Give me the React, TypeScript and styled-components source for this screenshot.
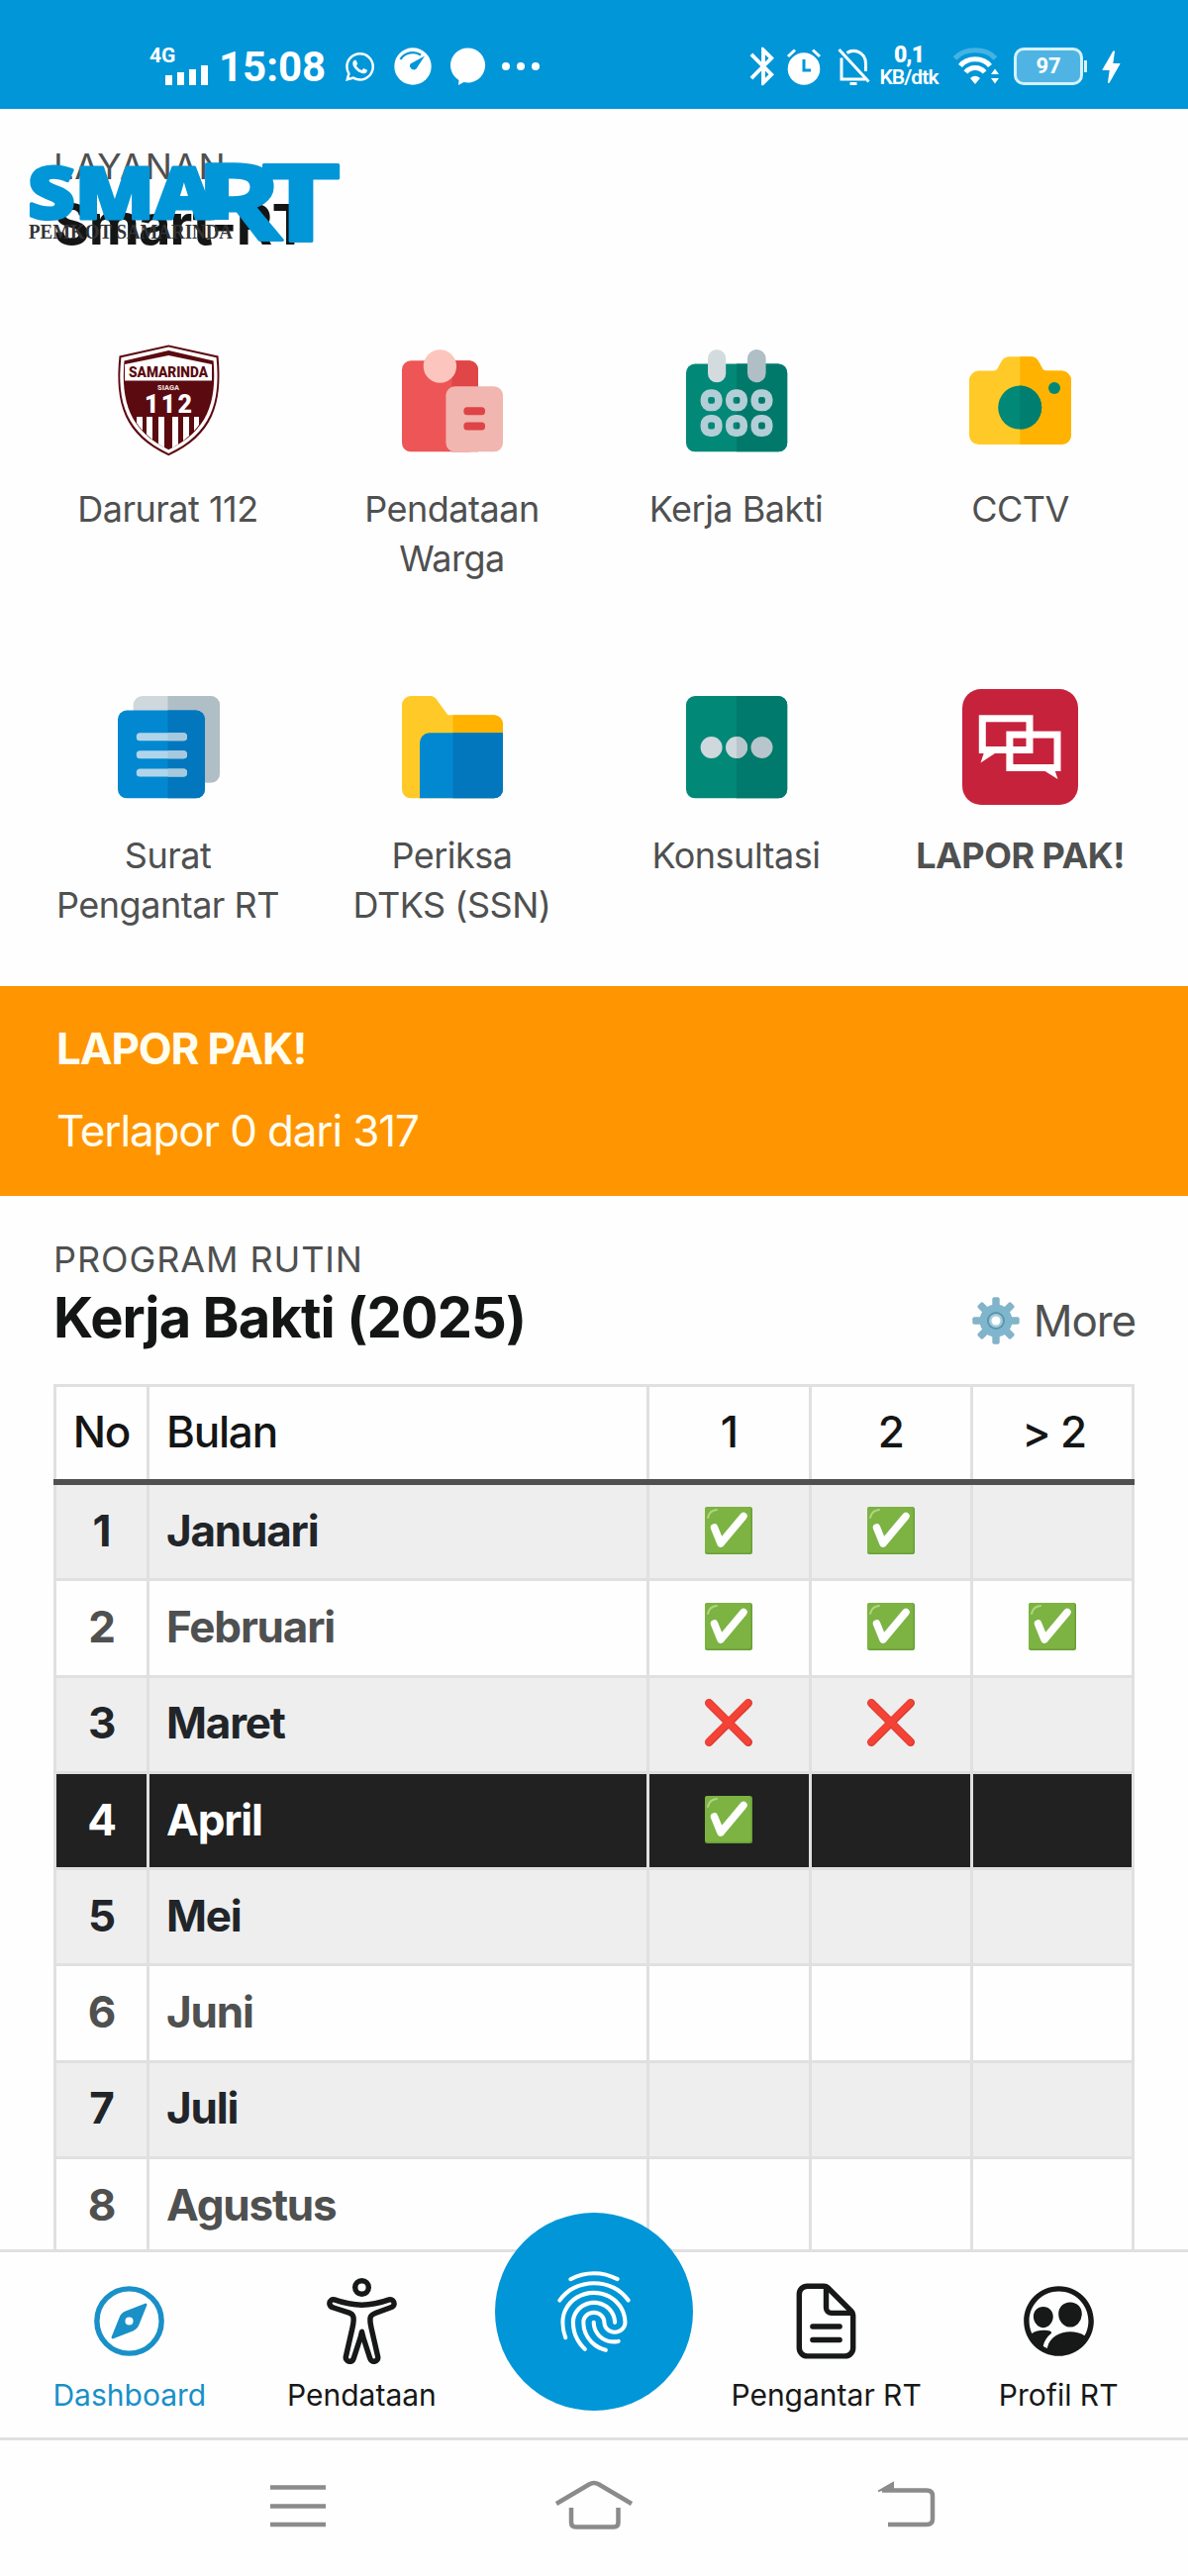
import React from 'react';
import styled, { createGlobalStyle } from 'styled-components';
import {
  IoAccessibilityOutline,
  IoCompassOutline,
  IoDocumentTextOutline,
  IoLogoWhatsapp,
  IoPeopleCircleOutline,
} from 'react-icons/io5';
import { MdBluetooth, MdBolt, MdFingerprint } from 'react-icons/md';

type Mark = 'yes' | 'no' | '';

const months: { name: string; marks: Mark[] }[] = [
  { name: 'Januari', marks: ['yes', 'yes', ''] },
  { name: 'Februari', marks: ['yes', 'yes', 'yes'] },
  { name: 'Maret', marks: ['no', 'no', ''] },
  { name: 'April', marks: ['yes', '', ''] },
  { name: 'Mei', marks: ['', '', ''] },
  { name: 'Juni', marks: ['', '', ''] },
  { name: 'Juli', marks: ['', '', ''] },
  { name: 'Agustus', marks: ['', '', ''] },
];

const CURRENT_MONTH = 4;

const ShieldIcon = () => (
  <svg viewBox='0 0 117 117'>
    <defs>
      <clipPath id='shield'>
        <path d='M59.3 8 L104 20 C107 58 98 88 59.3 108.5 C20 88 12 58 15 20 Z' />
      </clipPath>
    </defs>
    <path d='M59.3 2.6 L109.5 13.6 C114 62 104 94 59.3 114.3 C15 94 4.5 62 9.5 13.6 Z' fill='#5b0a10' />
    <path d='M59.3 4.5 L107.6 15.3 C112 61 102 92 59.3 112 C17 92 6.5 61 11.4 15.3 Z' fill='#fff' />
    <path d='M59.3 8 L104.6 18.5 C108 60 99 89 59.3 108.3 C20 89 11 60 14.5 18.5 Z' fill='#5b0a10' />
    <g clipPath='url(#shield)'>
      <path d='M15 38.5 V22 L59.3 13 L103 22 V38.5 Z' fill='#fff' />
      <path d='M27 75h6v32h-6zM37 75h6v32h-6zM49 75h6v32h-6zM63 75h6v32h-6zM74 75h6v32h-6zM85 75h5v32h-5z' fill='#fff' />
    </g>
    <ShieldText x='19' y='34.5' textLength='80' lengthAdjust='spacingAndGlyphs' fontSize='15' fill='#5b0a10'>
      SAMARINDA
    </ShieldText>
    <ShieldText x='48' y='48' textLength='22' lengthAdjust='spacingAndGlyphs' fontSize='7.5' fill='#e8d5d5'>
      SIAGA
    </ShieldText>
    <ShieldText x='35' y='71' textLength='48' lengthAdjust='spacing' fontSize='25' fill='#fff'>
      112
    </ShieldText>
  </svg>
);

const ClipboardIcon = () => (
  <svg viewBox='0 0 117 117'>
    <rect x='8' y='18.3' width='77' height='92' rx='9' fill='#ee5556' />
    <path d='M58.5 18.3H76a9 9 0 0 1 9 9V110.3H58.5Z' fill='#e04548' />
    <circle cx='46.4' cy='24' r='16.7' fill='#fcc5bd' />
    <rect x='52.4' y='44.3' width='57.6' height='66' rx='9' fill='#f0b6af' />
    <rect x='70.4' y='65.3' width='21.6' height='8' rx='3.5' fill='#de4347' />
    <rect x='70.4' y='80.5' width='21.6' height='8' rx='3.5' fill='#de4347' />
  </svg>
);

const CalendarIcon = () => (
  <svg viewBox='0 0 117 117'>
    <rect x='8' y='21.6' width='102.2' height='88.7' rx='9' fill='#028877' />
    <path d='M59 21.6H101.2a9 9 0 0 1 9 9V101.3a9 9 0 0 1-9 9H59Z' fill='#00796b' />
    <rect x='30' y='7' width='18.2' height='33.3' rx='9.1' fill='#d3dbdf' />
    <rect x='70' y='7' width='18.6' height='33.3' rx='9.2' fill='#b0bec5' />
    {[58.3, 84].map((y) =>
      [33.6, 59, 84.5].map((x) => (
        <rect key={`${x}-${y}`} x={x - 7.2} y={y - 7.2} width='14.4' height='14.4' rx='6' fill='none' stroke='#b3ced6' strokeWidth='7.6' />
      ))
    )}
  </svg>
);

const CameraIcon = () => (
  <svg viewBox='0 0 117 117'>
    <path
      d='M16.5 28.6H31c3 0 4-1 5.5-4l3-5.5c2-3.5 4.5-4.8 8-4.8H69c3.5 0 6 1.3 8 4.8l3 5.5c1.5 3 2.5 4 5.5 4H100.5a9.5 9.5 0 0 1 9.5 9.5V93.5a9.5 9.5 0 0 1-9.5 9.5H16.5a9.5 9.5 0 0 1-9.5-9.5V38.1a9.5 9.5 0 0 1 9.5-9.5Z'
      fill='#ffca28'
    />
    <path
      d='M58.2 14.3H69c3.5 0 6 1.3 8 4.8l3 5.5c1.5 3 2.5 4 5.5 4H100.5a9.5 9.5 0 0 1 9.5 9.5V93.5a9.5 9.5 0 0 1-9.5 9.5H58.2Z'
      fill='#ffb300'
    />
    <circle cx='58.2' cy='65.6' r='22' fill='#028877' />
    <path d='M58.2 43.6a22 22 0 0 1 0 44Z' fill='#007f70' />
    <circle cx='93' cy='46' r='6' fill='#028877' />
  </svg>
);

const LettersIcon = () => (
  <svg viewBox='0 0 117 117'>
    <rect x='23.7' y='7' width='87.3' height='87.6' rx='9' fill='#cfd8dc' />
    <path d='M58.5 7H102a9 9 0 0 1 9 9V85.6a9 9 0 0 1-9 9H58.5Z' fill='#b0bec5' />
    <rect x='8' y='21.6' width='88' height='88.7' rx='9' fill='#0288d1' />
    <path d='M58.5 21.6H87a9 9 0 0 1 9 9V101.3a9 9 0 0 1-9 9H58.5Z' fill='#0277bd' />
    {[44.2, 62.3, 80.4].map((y) => (
      <g key={y}>
        <rect x='26.8' y={y} width='51.2' height='8' rx='3.5' fill='#b0d5ea' />
        <path d={`M58.5 ${y}H74.5a3.5 3.5 0 0 1 3.5 4a3.5 3.5 0 0 1-3.5 4H58.5Z`} fill='#a6c9dd' />
      </g>
    ))}
  </svg>
);

const FolderIcon = () => (
  <svg viewBox='0 0 117 117'>
    <path d='M17 7H36c4 0 6 1.5 8 5l10.4 14.3H101a9 9 0 0 1 9 9V101a9 9 0 0 1-9 9.3H17a9 9 0 0 1-9-9V16a9 9 0 0 1 9-9Z' fill='#ffca28' />
    <path d='M59.5 26.3H101a9 9 0 0 1 9 9V60H59.5Z' fill='#ffb300' />
    <path d='M26 110.3V54a9.7 9.7 0 0 1 9.7-9.7H110V101.3a9 9 0 0 1-9 9Z' fill='#0288d1' />
    <path d='M59.5 44.3H110V101.3a9 9 0 0 1-9 9H59.5Z' fill='#0277bd' />
  </svg>
);

const ChatIcon = () => (
  <svg viewBox='0 0 117 117'>
    <rect x='8' y='7' width='102.2' height='103.3' rx='9' fill='#028877' />
    <path d='M59 7H101.2a9 9 0 0 1 9 9V101.3a9 9 0 0 1-9 9H59Z' fill='#007a6c' />
    <circle cx='33.6' cy='59' r='11' fill='#cfd8dc' />
    <circle cx='59' cy='59' r='11' fill='#cfd8dc' />
    <path d='M59 48a11 11 0 0 1 0 22Z' fill='#b7c6cc' />
    <circle cx='84.5' cy='59' r='11' fill='#b7c6cc' />
  </svg>
);

const LaporIcon = () => (
  <svg viewBox='0 0 117 117'>
    <rect width='117' height='117' rx='19' fill='#c7223c' />
    <rect x='20.3' y='29.8' width='47.7' height='31.7' fill='none' stroke='#fff' strokeWidth='7' />
    <rect x='47.9' y='46.1' width='48.1' height='33.4' fill='none' stroke='#fff' strokeWidth='7' />
    <path d='M22 64 L18.5 74.5 L34.5 64 Z M82 82 L96.5 91 L93.5 82 Z' fill='#fff' />
  </svg>
);

const CheckMark = () => (
  <MarkSvg viewBox='0 0 48 48'>
    <rect width='48' height='48' rx='2.5' fill='#689f38' />
    <rect width='46.5' height='46.5' rx='2.5' fill='#7cb342' />
    <path d='M3 11 C4 6 7 3.5 12 3' fill='none' stroke='#aed581' strokeWidth='2' strokeLinecap='round' />
    <path d='M9.5 21 L16 37 L39 9.5' fill='none' stroke='#fff' strokeWidth='7.5' strokeLinecap='round' strokeLinejoin='round' />
  </MarkSvg>
);

const CrossMark = () => (
  <MarkSvg viewBox='0 0 48 48'>
    <path d='M4.2 4.2 L43.8 43.8 M43.8 4.2 L4.2 43.8' fill='none' stroke='#d8382f' strokeWidth='8.4' strokeLinecap='round' />
    <path d='M4 4 L43.2 43.2 M43.4 4 L4 43.4' fill='none' stroke='#f44336' strokeWidth='6.6' strokeLinecap='round' />
  </MarkSvg>
);

const GearIcon = () => (
  <MarkSvg viewBox='0 0 48 48'>
    {[0, 45, 90, 135].map((angle) => (
      <rect key={angle} x='20.3' y='0.3' width='7.4' height='47.4' rx='2' fill='#83b3c8' transform={`rotate(${angle} 24 24)`} />
    ))}
    <circle cx='24' cy='24' r='16.5' fill='#7fb6cd' />
    <circle cx='24' cy='24' r='9' fill='#5a96ad' />
    <circle cx='24' cy='24' r='7' fill='#a3cbdb' />
    <circle cx='24' cy='24' r='4.5' fill='#fff' />
  </MarkSvg>
);

const services = [
  { label: 'Darurat 112', icon: <ShieldIcon /> },
  { label: 'Pendataan Warga', icon: <ClipboardIcon /> },
  { label: 'Kerja Bakti', icon: <CalendarIcon /> },
  { label: 'CCTV', icon: <CameraIcon /> },
  { label: 'Surat Pengantar RT', icon: <LettersIcon /> },
  { label: 'Periksa DTKS\u00a0(SSN)', icon: <FolderIcon /> },
  { label: 'Konsultasi', icon: <ChatIcon /> },
  { label: 'LAPOR PAK!', icon: <LaporIcon />, strong: true },
];

function StatusBar() {
  return (
    <Status>
      <StatusGroup>
        <Signal>
          <span>4G</span>
          <svg width='45' height='20' viewBox='0 0 45 20'>
            <path d='M1 10h7v10H1zM13 7h7v13H13zM25 4h7v16H25zM37 0h7v20H37z' fill='#fff' />
          </svg>
        </Signal>
        <Clock>15:08</Clock>
        <StatusIcon $gap={18}>
          <IoLogoWhatsapp size={33} />
        </StatusIcon>
        <StatusIcon $gap={18}>
          <svg width='38' height='38' viewBox='0 0 38 38'>
            <circle cx='19' cy='19' r='18.7' fill='#fff' />
            <path d='M6.5 12 C11 4.5 21 3.5 27 7.5' fill='none' stroke='#0096d8' strokeWidth='2.2' />
            <path d='M31 8.5 L22.5 21.5 A4 4 0 0 1 16.5 16.5 Z' fill='#0096d8' />
          </svg>
        </StatusIcon>
        <StatusIcon $gap={17}>
          <svg width='38' height='38' viewBox='0 0 38 38'>
            <path d='M19 .5a17.5 17.5 0 1 1-3.5 34.5L10 38l.5-5A17.5 17.5 0 0 1 19 .5Z' fill='#fff' />
          </svg>
        </StatusIcon>
        <StatusIcon $gap={15}>
          <svg width='40' height='10' viewBox='0 0 40 10'>
            <circle cx='5' cy='5' r='4' fill='#fff' />
            <circle cx='20' cy='5' r='4' fill='#fff' />
            <circle cx='35' cy='5' r='4' fill='#fff' />
          </svg>
        </StatusIcon>
      </StatusGroup>
      <StatusGroup>
        <MdBluetooth size={46} />
        <svg width='36' height='38' viewBox='0 0 36 38'>
          <circle cx='18' cy='21.5' r='16.3' fill='#fff' />
          <path d='M2 9 L9 2.5 M34 9 L27 2.5' stroke='#fff' strokeWidth='3' />
          <path d='M18 12v11h7' fill='none' stroke='#0096d8' strokeWidth='3' />
        </svg>
        <StatusIcon $gap={16}>
          <svg width='34' height='38' viewBox='0 0 34 38' fill='none' stroke='#fff' strokeWidth='3'>
            <path d='M1.5 2 L31.5 34.5' />
            <path d='M4 10.5V32H28' />
            <path d='M9.5 5.5C16 1 28.5 4 28.5 16.5V24' />
            <path d='M12.5 36.5h7' />
          </svg>
        </StatusIcon>
        <Speed>
          <b>0,1</b>
          <span>KB/dtk</span>
        </Speed>
        <StatusIcon $gap={14}>
          <svg width='47' height='38' viewBox='0 0 47 38' fill='none'>
            <path d='M1.5 11 C11 0 33 0 42.5 11' stroke='#45b2e4' strokeWidth='5' />
            <path d='M7 18.5 C14 9.5 30 9.5 37 18.5' stroke='#fff' strokeWidth='5' />
            <path d='M12.5 25 C17 19 27 19 31.5 25' stroke='#fff' strokeWidth='5' />
            <path d='M17 31 Q22 26.5 27 31 L22 37 Z' fill='#fff' />
            <path d='M38 27 L42 21.5 L46 27 Z M38 31 L42 36.5 L46 31 Z' fill='#fff' />
          </svg>
        </StatusIcon>
        <Battery>97</Battery>
        <BatteryTip />
        <MdBolt size={43} />
      </StatusGroup>
    </Status>
  );
}

function App() {
  return (
    <Screen>
      <GlobalStyle />
      <StatusBar />
      <Main>
        <Section>
          <Heading>
            <Kicker>LAYANAN</Kicker>
            <Title>Smart-RT</Title>
          </Heading>
          <Logo viewBox='0 0 330 90'>
            <defs>
              <clipPath id='legs'>
                <path d='M170 0H262V100H220L206 62H170Z' />
              </clipPath>
            </defs>
            <LogoCaption x='4' y='81' textLength='206' lengthAdjust='spacingAndGlyphs' fontSize='20'>
              PEMKOT SAMARINDA
            </LogoCaption>
            <LogoText $heavy x='3' y='61' textLength='188' lengthAdjust='spacingAndGlyphs' fontSize='73'>
              SMA
            </LogoText>
            <g clipPath='url(#legs)'>
              <LogoText x='172' y='82.5' textLength='88' lengthAdjust='spacingAndGlyphs' fontSize='107'>
                R
              </LogoText>
            </g>
            <LogoText x='239' y='82.5' textLength='80' lengthAdjust='spacingAndGlyphs' fontSize='107'>
              T
            </LogoText>
          </Logo>
        </Section>
        <Services>
          {services.map(({ label, icon, strong }) => (
            <Service key={label}>
              {icon}
              <ServiceLabel $strong={strong}>{label}</ServiceLabel>
            </Service>
          ))}
        </Services>
        <Banner>
          <strong>LAPOR PAK!</strong>
          <span>Terlapor 0 dari 317</span>
        </Banner>
        <Section $top={42}>
          <Heading>
            <Kicker>PROGRAM RUTIN</Kicker>
            <TitleRow>
              <Title>Kerja Bakti (2025)</Title>
              <More>
                <GearIcon />
                More
              </More>
            </TitleRow>
          </Heading>
          <Table>
            <HeadRow>
              <Cell $center>No</Cell>
              <Cell>Bulan</Cell>
              <Cell $center>1</Cell>
              <Cell $center>2</Cell>
              <Cell $center>&gt; 2</Cell>
            </HeadRow>
            {months.map(({ name, marks }, i) => (
              <Row key={name} $odd={i % 2 === 0} $current={i + 1 === CURRENT_MONTH}>
                <Cell $center>{i + 1}</Cell>
                <Cell>{name}</Cell>
                {marks.map((mark, j) => (
                  <Cell key={j} $center>
                    {mark === 'yes' && <CheckMark />}
                    {mark === 'no' && <CrossMark />}
                  </Cell>
                ))}
              </Row>
            ))}
          </Table>
        </Section>
      </Main>
      <TabBar>
        <Tab $active>
          <IoCompassOutline />
          Dashboard
        </Tab>
        <Tab>
          <IoAccessibilityOutline />
          Pendataan
        </Tab>
        <Fab>
          <MdFingerprint />
        </Fab>
        <Tab>
          <IoDocumentTextOutline />
          Pengantar RT
        </Tab>
        <Tab>
          <IoPeopleCircleOutline />
          Profil RT
        </Tab>
      </TabBar>
      <SystemBar>
        <svg width='80' height='56' viewBox='0 0 80 56'>
          <path d='M12 9.5H68M12 28.5H68M12 47H68' />
        </svg>
        <svg width='80' height='56' viewBox='0 0 80 56'>
          <path d='M2 26 L35 6.5 Q40 3.5 45 6.5 L78 26' />
          <path d='M17 30V45Q17 49.5 21.5 49.5H60Q64.5 49.5 64.5 45V30' />
        </svg>
        <svg width='80' height='56' viewBox='0 0 80 56'>
          <path d='M16 12.5H61Q67 12.5 67 18V41.5Q67 47 61 47H22' />
          <path d='M12 13.5 L27 5V12' fill='#8b8b8b' strokeWidth='2' />
        </svg>
      </SystemBar>
    </Screen>
  );
}

const GlobalStyle = createGlobalStyle`
  * {
    box-sizing: border-box;
  }
  body {
    margin: 0;
    background: #fff;
    font-family: Inter, Roboto, 'Liberation Sans', sans-serif;
  }
`;

const Screen = styled.div`
  display: flex;
  flex-direction: column;
  width: 1200px;
  height: 2602px;
  overflow: hidden;
  background: #fefefe;
`;

const Status = styled.header`
  display: flex;
  flex: none;
  justify-content: space-between;
  height: 110px;
  padding: 24px 56px 0 151px;
  background: #0096d8;
  color: #fff;
  font-family: Roboto, sans-serif;
`;

const StatusGroup = styled.div`
  display: flex;
  align-items: center;
  height: 86px;
  svg {
    flex: none;
  }
`;

const Signal = styled.div`
  display: flex;
  flex-direction: column;
  width: 60px;
  font-size: 21px;
  font-weight: 700;
  line-height: 16px;
  svg {
    margin: 2px 0 0 15px;
  }
`;

const Clock = styled.div`
  margin-left: 10px;
  font-size: 42px;
  font-weight: 700;
`;

const StatusIcon = styled.div<{ $gap: number }>`
  display: flex;
  margin-left: ${(props) => props.$gap}px;
`;

const Speed = styled.div`
  display: flex;
  flex-direction: column;
  align-items: center;
  width: 62px;
  margin-left: 7px;
  font-size: 21px;
  font-weight: 600;
  line-height: 23px;
  letter-spacing: -0.9px;
  white-space: nowrap;
  b {
    font-size: 23px;
  }
`;

const Battery = styled.div`
  width: 70px;
  height: 38px;
  margin-left: 14px;
  border: 3px solid #d4f2fd;
  border-radius: 10px;
  background: #4fb4e3;
  font-size: 22px;
  font-weight: 700;
  line-height: 32px;
  text-align: center;
`;

const BatteryTip = styled.div`
  width: 3px;
  height: 12px;
  margin: 0 3px 0 1px;
  background: #d4f2fd;
`;

const Main = styled.main`
  flex: 1;
  min-height: 0;
  overflow: hidden;
`;

const Section = styled.section<{ $top?: number }>`
  position: relative;
  padding: ${(props) => props.$top ?? 36}px 54px 0;
`;

const Heading = styled.div`
  display: flex;
  flex-direction: column;
`;

const Kicker = styled.div`
  color: #4f5050;
  font-size: 36px;
  line-height: 44px;
  letter-spacing: 0.9px;
`;

const TitleRow = styled.div`
  display: flex;
  justify-content: space-between;
`;

const Title = styled.h2`
  margin: 0;
  color: #141515;
  font-size: 56px;
  font-weight: 700;
  line-height: 74px;
  letter-spacing: -0.9px;
`;

const More = styled.div`
  display: flex;
  align-items: center;
  gap: 14px;
  padding-top: 6px;
  margin-right: -1px;
  color: #4f5050;
  font-size: 44px;
  letter-spacing: -1.1px;
`;

/* the app logo floats over the first heading */
const Logo = styled.svg`
  position: absolute;
  top: 50px;
  left: 25px;
  width: 330px;
  height: 90px;
  overflow: visible;
`;

const LogoText = styled.text<{ $heavy?: boolean }>`
  fill: #0096d8;
  stroke: #0096d8;
  stroke-width: 3px;
  stroke-linejoin: round;
  font-family: 'Open Sans', sans-serif;
  font-weight: ${(props) => (props.$heavy ? 800 : 700)};
`;

const LogoCaption = styled.text`
  fill: #333;
  font-family: 'Liberation Serif', serif;
  font-weight: 700;
`;

const ShieldText = styled.text`
  font-family: Roboto, sans-serif;
  font-weight: 900;
`;

const Services = styled.div`
  display: grid;
  grid-template-columns: repeat(4, 287px);
  justify-content: center;
  row-gap: 107px;
  padding: 82px 0 57px;
`;

const Service = styled.div`
  display: flex;
  flex-direction: column;
  align-items: center;
  svg {
    width: 117px;
    height: 117px;
    margin-bottom: 26px;
  }
`;

const ServiceLabel = styled.div<{ $strong?: boolean }>`
  width: 240px;
  color: #4f5050;
  font-size: 36px;
  font-weight: ${(props) => (props.$strong ? 700 : 400)};
  line-height: 50px;
  letter-spacing: -0.5px;
  text-align: center;
`;

const Banner = styled.div`
  display: flex;
  flex-direction: column;
  gap: 33px;
  height: 212px;
  padding: 38px 57px 0;
  background: #ff9500;
  color: #fffdf0;
  font-size: 44px;
  line-height: 50px;
  letter-spacing: -1.15px;
`;

const Table = styled.div`
  margin-top: 30px;
  border: 3px solid #e0e0e0;
  border-bottom: 0;
`;

const HeadRow = styled.div`
  display: grid;
  grid-template-columns: 94px 505px 163.5px 163.5px 1fr;
  height: 99px;
  margin: 0 -3px;
  padding-left: 3px;
  border-bottom: 6px solid #505050;
  color: #141515;
  font-size: 44px;
  font-weight: 500;
  letter-spacing: -1.2px;
`;

const Row = styled.div<{ $odd: boolean; $current: boolean }>`
  display: grid;
  grid-template-columns: 94px 505px 163.5px 163.5px 1fr;
  height: 97.3px;
  border-bottom: 3px solid #e0e0e0;
  background: ${(props) => (props.$current ? '#212121' : props.$odd ? '#eeeeee' : '#fefefe')};
  color: ${(props) => (props.$current ? '#fff' : props.$odd ? '#212529' : '#4f5050')};
  font-size: 44px;
  font-weight: 700;
  letter-spacing: -1.2px;
`;

const Cell = styled.div<{ $center?: boolean }>`
  display: flex;
  align-items: center;
  justify-content: ${(props) => (props.$center ? 'center' : 'flex-start')};
  padding: 0 0 3px ${(props) => (props.$center ? 0 : 17)}px;
  border-right: 3px solid #e0e0e0;
  &:last-child {
    border-right: 0;
  }
`;

const MarkSvg = styled.svg`
  width: 48px;
  height: 48px;
`;

const TabBar = styled.nav`
  display: grid;
  flex: none;
  grid-template-columns: repeat(5, 234.6px);
  justify-content: center;
  justify-items: center;
  height: 190px;
  border-top: 3px solid #e0e0e0;
`;

const Tab = styled.div<{ $active?: boolean }>`
  display: flex;
  flex-direction: column;
  align-items: center;
  padding-top: 26px;
  color: ${(props) => (props.$active ? '#1990c8' : '#171818')};
  font-size: 30px;
  line-height: 36px;
  white-space: nowrap;
  svg {
    width: 87px;
    height: 87px;
    margin-bottom: 13px;
  }
`;

const Fab = styled.div`
  display: flex;
  align-items: center;
  justify-content: center;
  width: 200px;
  height: 200px;
  margin-top: -40px;
  border-radius: 50%;
  background: #0096d8;
  color: #fff;
  z-index: 1;
  svg {
    width: 98px;
    height: 98px;
  }
`;

const SystemBar = styled.footer`
  display: grid;
  flex: none;
  grid-template-columns: 299px 299px 331px;
  align-items: center;
  justify-items: center;
  height: 140px;
  padding: 0 0 5px 151px;
  border-top: 3px solid #e0e0e0;
  svg {
    fill: none;
    stroke: #8b8b8b;
    stroke-width: 4.5px;
  }
`;

export default App;
